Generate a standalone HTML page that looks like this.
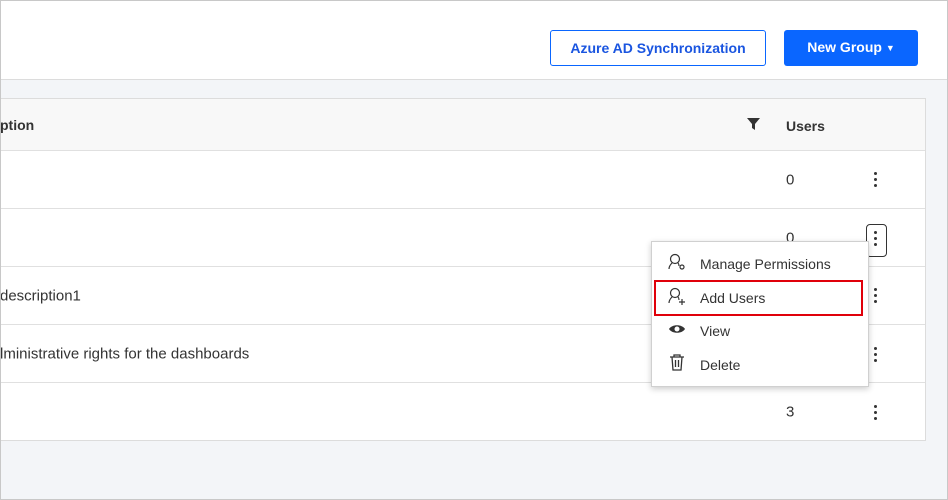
<!DOCTYPE html>
<html><head><style>
body{margin:0;width:948px;height:500px;overflow:hidden;font-family:"Liberation Sans",sans-serif;background:#f3f5f8;position:relative;color:#333}
.frame{position:absolute;left:0;top:0;width:946px;height:498px;border:1px solid #c8c8c8;pointer-events:none}
.top{position:absolute;left:0;top:0;width:948px;height:79px;background:#fff;border-bottom:1px solid #dcdcdc}
.btn1{position:absolute;left:550px;top:30px;width:214px;height:34px;border:1px solid #0a66ff;border-radius:3px;color:#1a55e0;font-size:14px;font-weight:bold;text-align:center;line-height:34px;background:#fff}
.btn2{position:absolute;left:784px;top:30px;width:134px;height:36px;background:#0a66ff;border-radius:3px;color:#fff;font-size:14px;font-weight:bold;text-align:center;line-height:35px}
.card{position:absolute;left:0;top:98px;width:925px;height:341px;border:1px solid #dcdcdc;border-left:none;background:#fff}
.row{position:absolute;left:0;width:925px;border-top:1px solid #e0e0e0;font-size:15px}
.row span{position:absolute;top:50%;transform:translateY(-50%)}
.dots{position:absolute;left:874px;font-size:0}
.dots i{display:block;width:3px;height:3px;background:#333;border-radius:2px;margin-bottom:3px}
.menu{position:absolute;left:651px;top:241px;width:216px;height:144px;background:#fff;border:1px solid #d0d0d0;box-shadow:0 2px 6px rgba(0,0,0,.2);font-size:14px}
.mi{position:absolute;left:48px;color:#333}
</style></head><body>
<div class="top">
<div class="btn1">Azure AD Synchronization</div>
<div class="btn2">New Group <span style="font-size:9px;vertical-align:1px">▼</span></div>
</div>
<div class="card">
<div class="row" style="top:0;height:51px;border-top:none;background:#f8f8f8;font-weight:bold;font-size:14px"><span style="left:0">ption</span><span style="left:786px;margin-top:1px">Users</span>
<svg style="position:absolute;left:747px;top:19px" width="13" height="13" viewBox="0 0 13 13"><path d="M0 0H13L8 6V12L5 10V6Z" fill="#333"/></svg></div>
<div class="row" style="top:51px;height:57px"><span style="left:786px">0</span></div>
<div class="row" style="top:109px;height:57px"><span style="left:786px">0</span></div>
<div class="row" style="top:167px;height:57px"><span style="left:0">description1</span></div>
<div class="row" style="top:225px;height:57px"><span style="left:0">lministrative rights for the dashboards</span></div>
<div class="row" style="top:283px;height:57px"><span style="left:786px">3</span></div>
</div>
<div class="dots" style="top:172px"><i></i><i></i><i></i></div>
<div style="position:absolute;left:866px;top:224px;width:19px;height:31px;border:1px solid #333;border-radius:4px;background:#fff"></div>
<div class="dots" style="top:231px"><i></i><i></i><i></i></div>
<div class="dots" style="top:288px"><i></i><i></i><i></i></div>
<div class="dots" style="top:347px"><i></i><i></i><i></i></div>
<div class="dots" style="top:405px"><i></i><i></i><i></i></div>
<div class="menu">
<svg style="position:absolute;left:16px;top:11px" width="18" height="18" viewBox="0 0 18 18" fill="none" stroke="#333" stroke-width="1.2"><circle cx="7" cy="6" r="4.5"/><path d="M4 10C2 12 1 14 1 16M10 10C11 11 11 12 11 13"/><circle cx="14" cy="14" r="2"/></svg>
<div class="mi" style="top:14px">Manage Permissions</div>
<div style="position:absolute;left:2px;top:38px;width:205px;height:32px;border:2px solid #e0000a"></div>
<svg style="position:absolute;left:16px;top:45px" width="18" height="18" viewBox="0 0 18 18" fill="none" stroke="#333" stroke-width="1.2"><circle cx="7" cy="6" r="4.5"/><path d="M4 10C2 12 1 14 1 16M10 10C11 11 11 12 11 13M11 15H17M14 12V18"/></svg>
<div class="mi" style="top:48px">Add Users</div>
<svg style="position:absolute;left:16px;top:80px" width="18" height="14" viewBox="0 0 18 14"><path d="M1 7C4 2 14 2 17 7C14 12 4 12 1 7Z" fill="#333"/><circle cx="9" cy="7" r="2.5" fill="#fff"/></svg>
<div class="mi" style="top:81px">View</div>
<svg style="position:absolute;left:17px;top:112px" width="16" height="17" viewBox="0 0 16 17" fill="none" stroke="#333" stroke-width="1.3"><path d="M1 3H15M5 3V1H11V3M3 3L4 16H12L13 3M6.5 6V13M9.5 6V13"/></svg>
<div class="mi" style="top:115px">Delete</div>
</div>
<div class="frame"></div>
</body></html>
